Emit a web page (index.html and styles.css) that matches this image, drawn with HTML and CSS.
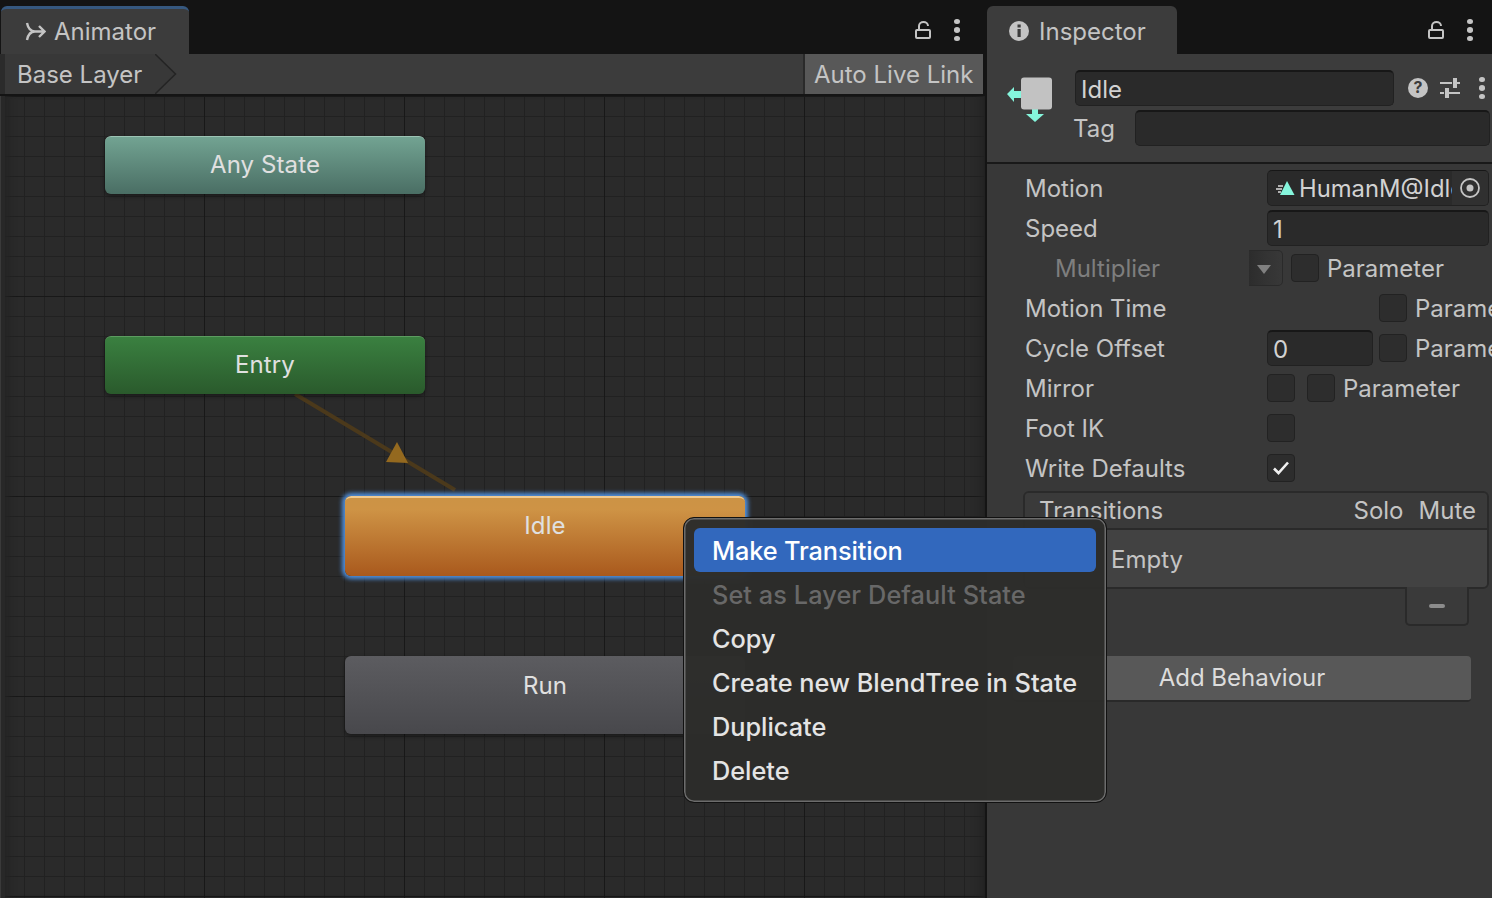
FILE: index.html
```html
<!DOCTYPE html>
<html lang="en">
<head>
    <meta charset="UTF-8">
    <meta name="viewport" content="width=device-width, initial-scale=1.0">
    <title>Animator</title>
    <link rel="stylesheet" href="styles.css">
</head>
<body>
    <div class="app">
        <!-- Animator window -->
        <section class="animator">
            <div class="tabbar">
                <div class="tab tab-animator">
                    <svg class="tab-icon" width="22" height="20" viewBox="0 0 22 20"><path d="M3 1 C4 6 7 9.500 11 9.500 H20 M3 18 C4 13 6.500 9.500 11 9.500 M15 4 L20.500 9.500 L15 15" fill="none" stroke="#c4c4c4" stroke-width="2.400"/></svg>
                    <span>Animator</span>
                </div>
                <div class="tab-tools">
                    <svg width="18" height="20" viewBox="0 0 18 20"><path d="M5 10 V6 C5 0.500 14 0.500 14 6" fill="none" stroke="#c4c4c4" stroke-width="2"/><rect x="2" y="10" width="14" height="8" rx="1" fill="none" stroke="#c4c4c4" stroke-width="2"/></svg>
                    <span class="kebab"><i></i><i></i><i></i></span>
                </div>
            </div>
            <div class="toolbar">
                <div class="crumb">
                    <span>Base Layer</span>
                    <svg class="crumb-tip" width="22" height="40" viewBox="0 0 22 40"><path d="M0 0 L20 20 L0 40 Z" fill="#383838"/><path d="M0 0 L20.500 20 L0 40" fill="none" stroke="#242424" stroke-width="1.500"/></svg>
                </div>
                <div class="live-link">Auto Live Link</div>
            </div>
            <div class="canvas">
                <svg class="arrow" width="200" height="120" viewBox="0 0 200 120">
                    <path d="M30 0 L190 96" stroke="#4b391b" stroke-width="4"/>
                    <path d="M132 48 L121 68 L143 69 Z" fill="#94691f"/>
                </svg>
                <div class="node node-any">Any State</div>
                <div class="node node-entry">Entry</div>
                <div class="node node-idle">Idle</div>
                <div class="node node-run">Run</div>
            </div>
        </section>

        <!-- Inspector window -->
        <section class="inspector">
            <div class="tabbar">
                <div class="tab tab-inspector">
                    <svg width="20" height="20" viewBox="0 0 20 20"><circle cx="10" cy="10" r="10" fill="#c4c4c4"/><rect x="8.500" y="8" width="3.200" height="8" fill="#3c3c3c"/><rect x="8.500" y="3.500" width="3.200" height="3" fill="#3c3c3c"/></svg>
                    <span>Inspector</span>
                </div>
                <div class="tab-tools">
                    <svg width="18" height="20" viewBox="0 0 18 20"><path d="M5 10 V6 C5 0.500 14 0.500 14 6" fill="none" stroke="#c4c4c4" stroke-width="2"/><rect x="2" y="10" width="14" height="8" rx="1" fill="none" stroke="#c4c4c4" stroke-width="2"/></svg>
                    <span class="kebab"><i></i><i></i><i></i></span>
                </div>
            </div>
            <div class="state-head">
                <svg class="state-icon" width="46" height="46" viewBox="0 0 46 46">
                    <path d="M0 17 L7 10 V14 H16 V21 H7 V25 Z" fill="#85f5dc"/>
                    <path d="M25 30 V37 H19 L28 45 L37 37 H31 V30 Z" fill="#85f5dc"/>
                    <rect x="14" y="0.500" width="31" height="32" rx="3" fill="#c2c2c2"/>
                </svg>
                <div class="state-fields">
                    <div class="name-row">
                        <div class="field field-name">Idle</div>
                        <svg width="22" height="22" viewBox="0 0 22 22"><circle cx="11" cy="11" r="10" fill="#c4c4c4"/><text x="11" y="16" class="help-mark" text-anchor="middle">?</text></svg>
                        <svg width="22" height="22" viewBox="0 0 22 22"><path d="M1 6 H13 M18 6 H21 M1 16 H5 M10 16 H21" stroke="#c4c4c4" stroke-width="2"/><rect x="14" y="1" width="4" height="10" fill="#c4c4c4"/><rect x="6" y="11" width="4" height="10" fill="#c4c4c4"/></svg>
                        <span class="kebab"><i></i><i></i><i></i></span>
                    </div>
                    <div class="tag-row">
                        <span class="tag-label">Tag</span>
                        <div class="field field-tag"></div>
                    </div>
                </div>
            </div>
            <div class="props">
                <div class="row">
                    <span class="prop-label">Motion</span>
                    <div class="field field-motion">
                        <svg width="20" height="16" viewBox="0 0 20 16"><path d="M11 1 L18.500 15 H4 Z" fill="#85f5dc"/><path d="M2 6 H7 M0 9 H6 M2 12 H5" stroke="#dddddd" stroke-width="1.300"/></svg>
                        <span class="motion-name">HumanM@Idle</span>
                        <span class="target"><svg width="20" height="20" viewBox="0 0 20 20"><circle cx="10" cy="10" r="9" fill="none" stroke="#c4c4c4" stroke-width="1.800"/><circle cx="10" cy="10" r="3.500" fill="#c4c4c4"/></svg></span>
                    </div>
                </div>
                <div class="row">
                    <span class="prop-label">Speed</span>
                    <div class="field field-wide">1</div>
                </div>
                <div class="row">
                    <span class="prop-label prop-sub dim">Multiplier</span>
                    <div class="dropdown"><i></i></div>
                    <span class="check check-after-drop"></span>
                    <span class="param">Parameter</span>
                </div>
                <div class="row">
                    <span class="prop-label">Motion Time</span>
                    <span class="check check-far"></span>
                    <span class="param">Parameter</span>
                </div>
                <div class="row">
                    <span class="prop-label">Cycle Offset</span>
                    <div class="field field-short">0</div>
                    <span class="check check-near"></span>
                    <span class="param">Parameter</span>
                </div>
                <div class="row">
                    <span class="prop-label">Mirror</span>
                    <span class="check"></span>
                    <span class="check check-second"></span>
                    <span class="param">Parameter</span>
                </div>
                <div class="row">
                    <span class="prop-label">Foot IK</span>
                    <span class="check"></span>
                </div>
                <div class="row">
                    <span class="prop-label">Write Defaults</span>
                    <span class="check">
                        <svg width="18" height="16" viewBox="0 0 18 16"><path d="M2 8.500 L6.500 13 L16 2.500" fill="none" stroke="#f0f0f0" stroke-width="2.600"/></svg>
                    </span>
                </div>
            </div>
            <div class="transitions">
                <div class="transitions-head">
                    <span>Transitions</span>
                    <span class="solo-mute"><span>Solo</span><span>Mute</span></span>
                </div>
                <div class="transitions-body">Empty</div>
            </div>
            <div class="list-foot"><i></i></div>
            <div class="add-behaviour">Add Behaviour</div>
        </section>

        <!-- Context menu -->
        <div class="menu">
            <div class="menu-item active">Make Transition</div>
            <div class="menu-item disabled">Set as Layer Default State</div>
            <div class="menu-item">Copy</div>
            <div class="menu-item">Create new BlendTree in State</div>
            <div class="menu-item">Duplicate</div>
            <div class="menu-item">Delete</div>
        </div>
    </div>
</body>
</html>
```

FILE: styles.css
```css
* {
    box-sizing: border-box;
}
html, body {
    margin: 0;
    padding: 0;
    height: 100%;
    overflow: hidden;
}
body {
    background-color: #141414;
    color: #c4c4c4;
    font-family: Inter, "Liberation Sans", sans-serif;
    font-size: 24px;
}
.app {
    position: relative;
    display: flex;
    width: 1492px;
    height: 898px;
}

/* tabs */
.tabbar {
    display: flex;
    justify-content: space-between;
    align-items: flex-end;
    height: 54px;
}
.tab {
    display: flex;
    align-items: center;
    height: 48px;
    background-color: #3c3c3c;
    border-radius: 6px 6px 0 0;
}
.tab-animator {
    width: 188px;
    margin-left: 1px;
    padding: 0 0 0 23px;
    gap: 8px;
    border-top: 3px solid #36587f;
}
.tab-inspector {
    width: 190px;
    padding: 2px 0 0 22px;
    gap: 10px;
}
.tab-tools {
    display: flex;
    align-items: center;
    gap: 22px;
    height: 54px;
    padding-right: 25px;
    padding-top: 6px;
}
.inspector .tab-tools {
    padding-right: 19px;
}
.kebab {
    display: flex;
    flex-direction: column;
    gap: 3px;
    width: 6px;
}
.kebab i {
    display: block;
    width: 6px;
    height: 5.500px;
    border-radius: 50%;
    background-color: #c4c4c4;
}

/* animator */
.animator {
    display: flex;
    flex-direction: column;
    width: 985px;
    height: 100%;
}
.toolbar {
    display: flex;
    justify-content: space-between;
    height: 40px;
    width: 983px;
    margin-bottom: 2px;
    background-color: #3c3c3c;
    border-left: 5px solid #2b2b2b;
}
.crumb {
    position: relative;
    width: 150px;
    padding: 1px 0 0 12px;
    line-height: 40px;
    background-color: #383838;
}
.crumb-tip {
    position: absolute;
    left: 150px;
    top: 0;
}
.live-link {
    width: 180px;
    padding: 1px 0 0 9px;
    line-height: 40px;
    background-color: #585858;
    border-left: 2px solid #2a2a2a;
}
.canvas {
    position: relative;
    flex: 1;
    background-color: #2a2a2a;
    background-image:
        linear-gradient(to right, #181818 1px, transparent 1px),
        linear-gradient(to bottom, #181818 1px, transparent 1px),
        linear-gradient(to right, #212121 1px, transparent 1px),
        linear-gradient(to bottom, #212121 1px, transparent 1px);
    background-size: 200px 200px, 200px 200px, 20px 20px, 20px 20px;
    background-position: 4px 0, 0 0, 4px 0, 0 0;
    box-shadow:
        inset 1px 0 0 #3a3a3a,
        inset 5px 0 0 #282828,
        inset 14px 0 8px -6px #232323,
        inset -12px 0 10px -8px #222222;
}
.arrow {
    position: absolute;
    left: 265px;
    top: 298px;
}
.node {
    position: absolute;
    text-align: center;
    letter-spacing: 0.1px;
    color: #e0e0e0;
    border-radius: 6px;
    box-shadow: 0 2px 4px rgba(0, 0, 0, 0.4);
}
.node-any {
    left: 105px;
    top: 40px;
    width: 320px;
    height: 58px;
    line-height: 56px;
    background: linear-gradient(#72a392, #4a6e64);
    border-top: 1px solid #9cc4b4;
}
.node-entry {
    left: 105px;
    top: 240px;
    width: 320px;
    height: 58px;
    line-height: 56px;
    background: linear-gradient(#3a8040, #2a5a2c);
    border-top: 1px solid #5c9c60;
}
.node-idle {
    left: 345px;
    top: 400px;
    width: 400px;
    height: 80px;
    line-height: 56px;
    background: linear-gradient(#cc9345, #ce9345 15%, #a9591d);
    border-top: 2px solid #f0ca90;
    box-shadow: 0 0 4px 3px #4f8fdc;
}
.node-run {
    left: 345px;
    top: 560px;
    width: 400px;
    height: 78px;
    padding-top: 1px;
    line-height: 58px;
    background: linear-gradient(#5c5c60, #48484c);
}

/* inspector */
.inspector {
    display: flex;
    flex-direction: column;
    width: 505px;
    margin-left: 2px;
    height: 100%;
    background-color: #383838;
}
.inspector .tabbar {
    background-color: #141414;
    flex: none;
}
.state-head {
    display: flex;
    height: 110px;
    padding: 16px 0 0 20px;
    background-color: #3c3c3c;
    border-bottom: 2px solid #191919;
}
.state-icon {
    flex: none;
    margin-top: 7px;
}
.state-fields {
    margin-left: 22px;
    flex: 1;
}
.name-row {
    display: flex;
    align-items: center;
    gap: 10px;
    height: 36px;
}
.name-row .field-name {
    width: 319px;
    margin-right: 3px;
}
.name-row .kebab {
    margin-left: 8px;
}
.help-mark {
    font-size: 16px;
    font-weight: 700;
    fill: #3c3c3c;
}
.tag-row {
    display: flex;
    align-items: center;
    height: 36px;
    margin-top: 4px;
}
.tag-label {
    width: 62px;
    margin-left: -2px;
}
.field {
    flex: none;
    height: 36px;
    line-height: 36px;
    padding-left: 5px;
    color: #d2d2d2;
    background-color: #2a2a2a;
    border: 1px solid #212121;
    border-top: 2px solid #171717;
    border-radius: 5px;
}
.field-tag {
    width: 355px;
}
.props {
    padding: 4px 0 0 38px;
}
.row {
    display: flex;
    align-items: center;
    height: 40px;
}
.prop-label {
    flex: none;
    width: 242px;
}
.prop-sub {
    width: 224px;
    margin-left: 30px;
    margin-right: -30px;
}
.dim {
    color: #7e7e7e;
}
.field-wide {
    width: 222px;
}
.field-short {
    width: 106px;
}
.field-motion {
    display: flex;
    align-items: center;
    position: relative;
    width: 222px;
    padding-left: 8px;
    border-top-width: 1px;
    overflow: hidden;
}
.motion-name {
    margin: 2px 0 0 3px;
    font-size: 23.800px;
    white-space: nowrap;
    color: #d2d2d2;
}
.target {
    position: absolute;
    right: 0;
    top: 0;
    display: flex;
    align-items: center;
    justify-content: center;
    width: 36px;
    height: 34px;
    background-color: #303030;
}
.check {
    display: inline-flex;
    align-items: center;
    justify-content: center;
    flex: none;
    width: 28px;
    height: 28px;
    background-color: #2d2d2d;
    border: 1px solid #222222;
    border-radius: 4px;
}
.check-second {
    margin-left: 12px;
}
.check-far {
    margin-left: 112px;
}
.check-near {
    margin-left: 6px;
}
.check-after-drop {
    margin-left: 8px;
}
.param {
    margin-left: 8px;
    white-space: nowrap;
}
.dropdown {
    position: relative;
    flex: none;
    width: 34px;
    height: 36px;
    background: linear-gradient(to right, #2c2c2c, #333333 50%, #383838);
    border: 1px solid #2a2a2a;
    border-left: none;
    border-radius: 0 5px 5px 0;
}
.dropdown i {
    position: absolute;
    left: 8px;
    top: 14px;
    width: 0;
    height: 0;
    border-left: 7.500px solid transparent;
    border-right: 7.500px solid transparent;
    border-top: 9px solid #808080;
}
.transitions {
    width: 466px;
    margin: 3px 0 0 36px;
    border: 2px solid #2a2a2a;
    border-radius: 6px;
    overflow: hidden;
}
.transitions-head {
    display: flex;
    justify-content: space-between;
    height: 37px;
    padding: 0 11px 0 14px;
    line-height: 36px;
    background-color: #3a3a3a;
    border-bottom: 2px solid #2a2a2a;
}
.solo-mute {
    display: flex;
    gap: 15px;
}
.transitions-body {
    height: 57px;
    padding: 1px 0 0 86px;
    line-height: 58px;
    background-color: #424242;
}
.list-foot {
    display: flex;
    align-items: center;
    justify-content: center;
    width: 64px;
    height: 39px;
    margin-left: 418px;
    margin-top: -2px;
    border: 2px solid #2a2a2a;
    border-top: none;
    border-radius: 0 0 5px 5px;
    background-color: #3a3a3a;
}
.list-foot i {
    display: block;
    width: 16px;
    height: 4px;
    border-radius: 2px;
    background-color: #8c8c8c;
}
.add-behaviour {
    width: 458px;
    height: 46px;
    margin: 30px 0 0 26px;
    line-height: 43px;
    text-align: center;
    color: #dcdcdc;
    background-color: #585858;
    border-bottom: 2px solid #292929;
    border-radius: 4px;
}

/* context menu */
.menu {
    position: absolute;
    left: 683px;
    top: 517px;
    width: 424px;
    height: 286px;
    padding: 10px;
    background-color: rgba(45, 45, 43, 0.98);
    border: 1px solid #111111;
    border-radius: 11px;
    box-shadow: inset 0 0 0 1.500px #6c6c6c;
}
.menu-item {
    height: 44px;
    padding: 1px 0 0 18px;
    line-height: 44px;
    font-weight: 500;
    font-size: 25.300px;
    color: #e4e4e4;
    border-radius: 6px;
    white-space: nowrap;
}
.menu-item.active {
    color: #ffffff;
    letter-spacing: -0.12px;
    background-color: #3268bd;
}
.menu-item.disabled {
    color: #686868;
    letter-spacing: 0.08px;
}
```
